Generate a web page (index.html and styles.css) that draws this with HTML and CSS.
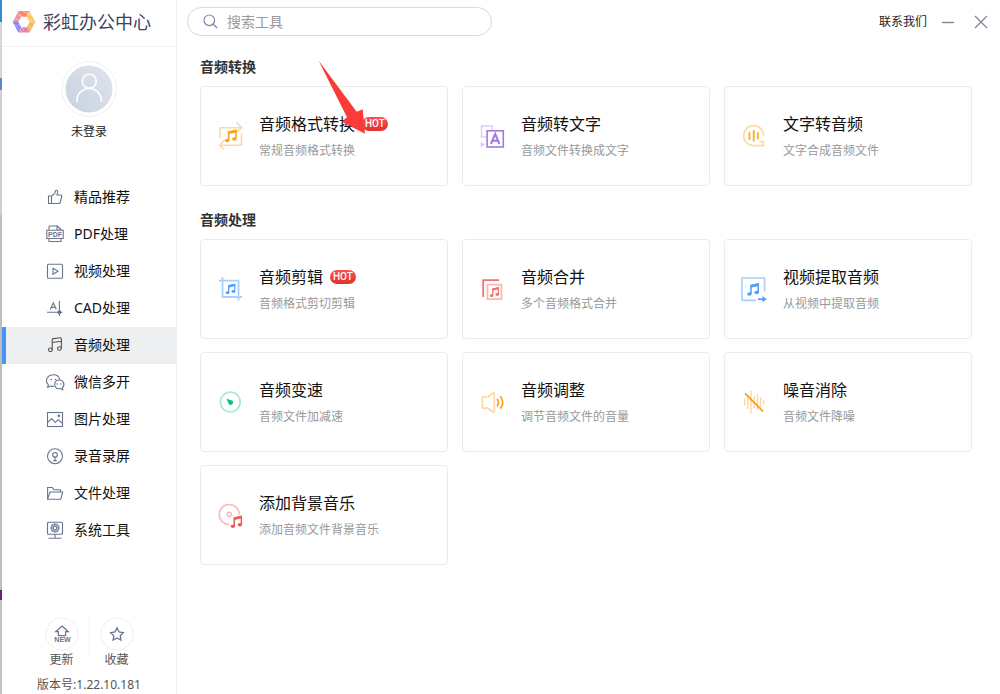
FILE: index.html
```html
<!DOCTYPE html>
<html lang="zh-CN">
<head>
<meta charset="utf-8">
<title>彩虹办公中心</title>
<link rel="stylesheet" href="styles.css">
</head>
<body>
<svg class="defs" aria-hidden="true">
  <defs>
    <symbol id="note" viewBox="0 0 12 13">
      <path d="M4 10.8V3L11 1.4V9.4" fill="none" stroke="currentColor" stroke-width="1.5"/>
      <path d="M3.4 2.4L11.6 .6V3.3L3.4 5.1z" fill="currentColor"/>
      <ellipse cx="2.6" cy="11" rx="2.2" ry="1.7" fill="currentColor"/>
      <ellipse cx="9.5" cy="9.6" rx="2.2" ry="1.7" fill="currentColor"/>
    </symbol>
  </defs>
</svg>
<div class="app">
  <div class="edge"></div>
  <aside class="sidebar">
    <div class="brand">
      <svg class="logo" width="24" height="24" viewBox="0 0 24 24">
        <path d="M.7 12L6.5 1L9.4 6.7L6.2 12z" fill="#f08fa0"/>
        <path d="M6.5 1H17.5L14.6 6.7H9.4z" fill="#f58a68"/>
        <path d="M17.5 1L23.3 12H17.8L14.6 6.7z" fill="#fbc95c"/>
        <path d="M23.3 12L17.5 22.6L14.6 17.2L17.8 12z" fill="#fbb35c"/>
        <path d="M6.5 22.6H17.5L14.6 17.2H9.4z" fill="#e77fb4"/>
        <path d="M.7 12H6.2L9.4 17.2L6.5 22.6z" fill="#8a82f2"/>
        <path d="M5 4L12 7.6M3 8L8 10.6M10 1L17 4.7M14 1L20 6M18 9L22 15M16 16L20 18M6 14L12 20M3 14L10 22" stroke="#fff" stroke-width=".7" opacity=".6"/>
      </svg>
      <h1 class="brand-name">彩虹办公中心</h1>
    </div>
    <button class="profile" type="button">
      <svg class="avatar" width="56" height="56" viewBox="0 0 56 56" fill="none">
        <defs><linearGradient id="face" x1="1" y1="0" x2="0" y2="1"><stop offset="0" stop-color="#e0e3ed"/><stop offset="1" stop-color="#c8d2e1"/></linearGradient></defs>
        <circle cx="28" cy="28" r="27.3" stroke="#eef0f5"/>
        <circle cx="28" cy="28" r="23.5" fill="url(#face)"/>
        <circle cx="28.3" cy="20.3" r="7" stroke="#fff" stroke-width="1.6"/>
        <path d="M16 41V39.5A12.2 12 0 0 1 40.4 39.5V41" stroke="#fff" stroke-width="1.6"/>
      </svg>
      <span>未登录</span>
    </button>
    <nav class="nav">
      <a class="nav-item" href="#"><svg class="nav-icon" viewBox="0 0 18 18"><path d="M2.5 8H5.5V15.5H2.5z M5.5 8L8.7 5.6L9.5 2.8C10 1.8 12 2.4 11.7 4.2L11 7H14.5Q16 7 15.7 8.5L14.4 14Q14 15.5 12.7 15.5H5.5"/></svg>精品推荐</a>
      <a class="nav-item" href="#"><svg class="nav-icon" viewBox="0 0 18 18"><path d="M3 5V2Q3 1 4 1H11.5L15 4.5V5 M11 1V5H15 M3 14V16.5H15V14 M.8 5.3H17.2V13.5H.8z"/><text class="pdf-mark" x="9" y="12">PDF</text></svg>PDF处理</a>
      <a class="nav-item" href="#"><svg class="nav-icon" viewBox="0 0 18 18"><rect x="1.5" y="2.2" width="15" height="14" rx="1"/><path d="M7 6.2V12.2L12 9.2z"/></svg>视频处理</a>
      <a class="nav-item" href="#"><svg class="nav-icon" viewBox="0 0 18 18"><path d="M1 13.3H16.5 M13.4 2V17 M4.3 10.5L7.3 3.8L10.3 10.5 M5.4 8.4H9.2"/><circle class="solid" cx="13.4" cy="13.3" r="1.4"/></svg>CAD处理</a>
      <a class="nav-item active" href="#" aria-current="page"><svg class="nav-icon" viewBox="0 0 18 18"><path d="M6.2 13.8V4Q6.2 2.8 7.5 2.6L14.2 1.8Q15.4 1.7 15.4 3V12.2 M6.2 6.5L15.4 5.3"/><ellipse cx="4.4" cy="13.8" rx="1.9" ry="1.8"/><ellipse cx="13.4" cy="12.5" rx="1.9" ry="1.8"/></svg>音频处理</a>
      <a class="nav-item" href="#"><svg class="nav-icon" viewBox="0 0 18 18"><path d="M8.2 13.4Q6 13.8 4.3 13L1.7 14.3L2.3 11.7C-2 7 2 1.8 7.4 1.8Q12.8 1.8 13.8 6.8"/><path d="M13.2 7C7.5 7 7 15.6 13 15.8L14.7 15.6L16.7 16.7L16.4 14.8C19.5 11.7 17.5 7 13.2 7z"/><path d="M5.3 6v1 M9.5 6v1 M11.2 10.6v1 M14.8 10.6v1" stroke-width="1.6"/></svg>微信多开</a>
      <a class="nav-item" href="#"><svg class="nav-icon" viewBox="0 0 18 18"><rect x="1.5" y="2.5" width="15" height="14"/><path d="M2 12.2L5.7 8.6L9.3 12.5L12.2 9.7L16 13"/><circle class="solid" cx="12.8" cy="5.8" r=".8"/></svg>图片处理</a>
      <a class="nav-item" href="#"><svg class="nav-icon" viewBox="0 0 18 18"><circle cx="9" cy="9.2" r="7.5"/><circle cx="9" cy="7.8" r="2.3"/><path d="M9 10V13.6 M7.3 13.6H10.7"/></svg>录音录屏</a>
      <a class="nav-item" href="#"><svg class="nav-icon" viewBox="0 0 18 18"><path d="M1.6 15V3.5H6.2L8 5.7H14.5V8 M1.6 15.2L4 8H16.7L14.8 15.2z"/></svg>文件处理</a>
      <a class="nav-item" href="#"><svg class="nav-icon" viewBox="0 0 18 18"><rect x="1.5" y="1.2" width="15" height="12" rx="1"/><path d="M9 13V17 M2.5 17.2H15.5"/><circle cx="9" cy="7" r="4"/><circle cx="9" cy="7" r="1.8"/><path d="M9 3v2 M9 9v2 M5 7h2 M11 7h2 M6.3 4.2l1.4 1.4 M11.7 4.2l-1.4 1.4 M6.3 9.8l1.4-1.4 M11.7 9.8l-1.4-1.4"/></svg>系统工具</a>
    </nav>
    <footer class="side-foot">
      <div class="foot-actions">
        <button class="foot-btn" type="button">
          <svg width="34" height="34" viewBox="0 0 34 34"><circle cx="17" cy="17" r="16.2" fill="none" stroke="#eceef2"/><path d="M17 9L23.3 14.7H20.6V18.7H13.4V14.7H10.7z" fill="none" stroke="#68748f" stroke-width="1.2"/><text class="new-mark" x="17.5" y="25">NEW</text></svg>
          <span>更新</span>
        </button>
        <span class="foot-split"></span>
        <button class="foot-btn" type="button">
          <svg width="34" height="34" viewBox="0 0 34 34"><circle cx="17" cy="17" r="16.2" fill="none" stroke="#eceef2"/><path d="M17 11L19 15L23.3 15.6L20.2 18.7L20.9 23L17 21L13.1 23L13.8 18.7L10.7 15.6L15 15z" fill="none" stroke="#68748f" stroke-width="1.3"/></svg>
          <span>收藏</span>
        </button>
      </div>
      <p class="version">版本号:1.22.10.181</p>
    </footer>
  </aside>
  <div class="main">
    <header class="topbar">
      <label class="search">
        <svg width="16" height="16" viewBox="0 0 16 16" fill="none" stroke="#7b88a8" stroke-width="1.2"><circle cx="6.3" cy="6.3" r="5.3"/><path d="M10.2 10.2L14.2 14"/></svg>
        <input class="search-input" type="text" placeholder="搜索工具" aria-label="搜索工具">
      </label>
      <div class="window-tools">
        <a class="contact" href="#">联系我们</a>
        <button class="win-btn" type="button" aria-label="最小化"><svg width="14" height="14" viewBox="0 0 14 14"><path d="M1 7.5H13" stroke="#7d8594" stroke-width="1.4"/></svg></button>
        <button class="win-btn" type="button" aria-label="关闭"><svg width="14" height="14" viewBox="0 0 14 14"><path d="M1 1L13 13M13 1L1 13" stroke="#7d8594" stroke-width="1.2"/></svg></button>
      </div>
    </header>
    <main class="content">
      <section>
        <h2 class="section-title">音频转换</h2>
        <div class="grid">
          <a class="card" href="#">
            <svg class="card-icon" viewBox="0 0 26 26"><path d="M2 15V4.7H23 M18.5 -.4L23.7 4.7L19 9 M23.5 10.5V22.3H2 M6.5 26.5L1.5 22.3L6.5 17.5" fill="none" stroke="#fddaa4" stroke-width="1.6"/><use href="#note" x="6.5" y="6" width="12.5" height="13.5" color="#fba41d"/></svg>
            <div class="card-text"><h3 class="card-title">音频格式转换<span class="hot">HOT</span></h3><p class="card-desc">常规音频格式转换</p></div>
          </a>
          <a class="card" href="#">
            <svg class="card-icon" viewBox="0 0 26 26"><path d="M6 14H1.5V3H12V6.5" fill="none" stroke="#dccbfa" stroke-width="1.5"/><path d="M.7 18.8L4.8 21.5L.7 24.2z" fill="#dccbfa"/><rect x="7.1" y="7.8" width="16.2" height="16.2" fill="#fff" stroke="#a077ea" stroke-width="1.6"/><path d="M11 21L15.2 10.9L19.4 21M12.6 17.7H17.8" fill="none" stroke="#a077ea" stroke-width="2"/></svg>
            <div class="card-text"><h3 class="card-title">音频转文字</h3><p class="card-desc">音频文件转换成文字</p></div>
          </a>
          <a class="card" href="#">
            <svg class="card-icon" viewBox="0 0 26 26"><path d="M21.7 12.7A10 10 0 1 0 11.7 22.7H21.3V18.7H17.5" fill="none" stroke="#fddaa4" stroke-width="1.7"/><path d="M7.5 8.7V17M11.7 7V18.5M15.9 9.3V16.3" stroke="#fbb01d" stroke-width="1.8"/></svg>
            <div class="card-text"><h3 class="card-title">文字转音频</h3><p class="card-desc">文字合成音频文件</p></div>
          </a>
        </div>
      </section>
      <section>
        <h2 class="section-title">音频处理</h2>
        <div class="grid">
          <a class="card" href="#">
            <svg class="card-icon" viewBox="0 0 26 26"><path d="M1 4.7H20.5V24.5M4.5 1V21H24" fill="none" stroke="#a9d0fd" stroke-width="1.8"/><use href="#note" x="7.2" y="7.2" width="10.5" height="11.3" color="#519ffb"/></svg>
            <div class="card-text"><h3 class="card-title">音频剪辑<span class="hot">HOT</span></h3><p class="card-desc">音频格式剪切剪辑</p></div>
          </a>
          <a class="card" href="#">
            <svg class="card-icon" viewBox="0 0 26 26"><path d="M3.2 21V4.2H19" fill="none" stroke="#ef7471" stroke-width="1.8"/><rect x="7.4" y="8.7" width="14" height="14.4" fill="none" stroke="#f9bcbb" stroke-width="1.9"/><use href="#note" x="9.4" y="10.5" width="10" height="10.8" color="#ef7471"/></svg>
            <div class="card-text"><h3 class="card-title">音频合并</h3><p class="card-desc">多个音频格式合并</p></div>
          </a>
          <a class="card" href="#">
            <svg class="card-icon" viewBox="0 0 26 26"><path d="M22.6 15.5V2.9Q22.6 2 21.7 2H.9Q0 2 0 2.9V23.5Q0 24.4 .9 24.4H14" fill="none" stroke="#a9d0fd" stroke-width="1.7"/><use href="#note" x="4.8" y="6.5" width="12.5" height="13.5" color="#519ffb"/><path d="M16 23.2H22" stroke="#519ffb" stroke-width="1.8"/><path d="M20.5 20L24.7 23.2L20.5 26.3z" fill="#519ffb"/></svg>
            <div class="card-text"><h3 class="card-title">视频提取音频</h3><p class="card-desc">从视频中提取音频</p></div>
          </a>
          <a class="card" href="#">
            <svg class="card-icon" viewBox="0 0 26 26"><circle cx="12.3" cy="13" r="9.9" fill="none" stroke="#aee7d2" stroke-width="1.7"/><path d="M8.5 9.7L14.6 11.8A2.4 2.4 0 1 1 10.8 15z" fill="#10bd82"/></svg>
            <div class="card-text"><h3 class="card-title">音频变速</h3><p class="card-desc">音频文件加减速</p></div>
          </a>
          <a class="card" href="#">
            <svg class="card-icon" viewBox="0 0 26 26"><path d="M2.3 8.5Q2.3 7.8 3 7.8H8L13 4Q14.3 3.6 14.3 5V22Q14.3 23.4 13 23L8 19.2H3Q2.3 19.2 2.3 18.5z" fill="none" stroke="#fddaa4" stroke-width="1.7"/><path d="M17 9.7Q19.8 13.5 17 17.3M20.3 7.2Q25.1 13.5 20.3 19.8" fill="none" stroke="#fba41d" stroke-width="1.7"/></svg>
            <div class="card-text"><h3 class="card-title">音频调整</h3><p class="card-desc">调节音频文件的音量</p></div>
          </a>
          <a class="card" href="#">
            <svg class="card-icon" viewBox="0 0 26 26"><path d="M2.6 9.5V16.5M5.8 6V20M9 2V24.5M12.2 7V19.5M15.4 5.5V21M18.6 8V19M21.6 11V15.5" stroke="#fddaa4" stroke-width="1.5"/><path d="M3 4.3L21 22.3" stroke="#fb9d1d" stroke-width="1.8"/></svg>
            <div class="card-text"><h3 class="card-title">噪音消除</h3><p class="card-desc">音频文件降噪</p></div>
          </a>
          <a class="card" href="#">
            <svg class="card-icon" viewBox="0 0 26 26"><path d="M21.2 12.5A10 10 0 1 0 11.3 22.5" fill="none" stroke="#f9bcbb" stroke-width="1.7"/><circle cx="11.3" cy="12.4" r="2.1" fill="none" stroke="#f9bcbb" stroke-width="1.5"/><use href="#note" x="12.2" y="13" width="12.2" height="13.2" color="#ec5c59"/></svg>
            <div class="card-text"><h3 class="card-title">添加背景音乐</h3><p class="card-desc">添加音频文件背景音乐</p></div>
          </a>
        </div>
      </section>
    </main>
    <svg class="pointer" width="48" height="75" viewBox="0 0 48 75" aria-hidden="true"><path d="M.5 .5L38.7 51.7L44.7 49.3L47 73.7L23.7 61.7L29 57.3z" fill="#fb3a3a"/></svg>
  </div>
</div>
</body>
</html>
```
FILE: styles.css
```css
* { box-sizing: border-box; }
body {
  margin: 0;
  font-family: "Noto Sans", "Noto Sans CJK SC", sans-serif;
  font-size: 12px;
  line-height: 18px;
  color: #222;
  background: #fff;
}
h1, h2, h3, p { margin: 0; font-weight: 400; }
a { color: inherit; text-decoration: none; }
button { padding: 0; border: 0; background: none; font: inherit; color: inherit; }
svg { display: block; flex: none; overflow: visible; }
.defs { position: absolute; width: 0; height: 0; }

.app { display: flex; min-height: 100vh; }
.edge {
  flex: none;
  width: 2px;
  background: linear-gradient(#2f8ad8 0 22px, #d6d6d6 22px 78px, #5f86c8 78px 90px, #d0d0d0 90px 215px, #bdbdbd 215px 590px, #5d2a66 590px 600px, #c4c4c4 600px);
}
.sidebar {
  display: flex;
  flex: none;
  flex-direction: column;
  width: 175px;
  border-right: 1px solid #f2f2f4;
}
.brand {
  display: flex;
  align-items: center;
  gap: 7px;
  height: 47px;
  padding: 0 0 3px 10px;
  border-bottom: 1px solid #f2f2f4;
}
.brand-name { font-size: 18px; line-height: 26px; color: #3c4260; }
.profile {
  display: flex;
  flex-direction: column;
  align-items: center;
  gap: 6px;
  padding-top: 14px;
}
.nav { display: flex; flex-direction: column; margin-top: 38px; }
.nav-item {
  display: flex;
  align-items: center;
  gap: 10px;
  height: 37px;
  padding: 0 0 2px 40px;
  border-left: 4px solid transparent;
  font-size: 14px;
  color: #111;
}
.nav-item.active { border-color: #4792fb; background: #edeff1; }
.nav-icon { width: 18px; height: 18px; fill: none; stroke: #68748f; stroke-width: 1.1; }
.active .nav-icon { stroke: #555; }
.nav-icon .solid { fill: #68748f; }
.pdf-mark, .new-mark {
  font-family: "Liberation Sans", sans-serif;
  font-size: 7px;
  font-weight: 700;
  text-anchor: middle;
  fill: #68748f;
  stroke: none;
}

.side-foot { margin-top: auto; color: #555; }
.foot-actions { display: flex; justify-content: center; gap: 10px; }
.foot-btn { display: flex; flex-direction: column; align-items: center; width: 34px; }
.foot-split { width: 1px; height: 38px; background: #f4f4f6; }
.version { margin-top: 7px; text-align: center; }

.main { position: relative; flex: 1; min-width: 0; }
.topbar {
  display: flex;
  align-items: center;
  justify-content: space-between;
  height: 43px;
  padding: 0 12px 0 10px;
}
.search {
  display: flex;
  align-items: center;
  gap: 8px;
  width: 305px;
  height: 29px;
  padding: 0 15px;
  border: 1px solid #dadada;
  border-radius: 15px;
}
.search-input {
  flex: 1;
  min-width: 0;
  padding: 0;
  border: 0;
  outline: 0;
  background: none;
  font: inherit;
  font-size: 14px;
}
.search-input::placeholder { color: #999; opacity: 1; }
.window-tools { display: flex; align-items: center; gap: 14px; }
.win-btn + .win-btn { margin-left: 5px; }

.content { display: grid; gap: 24px; padding: 14px 28px 24px 23px; }
.section-title { margin-bottom: 9px; font-size: 14px; line-height: 20px; font-weight: 700; color: #333; }
.grid { display: grid; grid-template-columns: repeat(3, 1fr); gap: 13px 14px; }
.card {
  display: flex;
  align-items: center;
  gap: 15px;
  min-height: 100px;
  padding: 0 17px;
  border: 1px solid #ebebeb;
  border-radius: 4px;
}
.card-icon { width: 26px; height: 26px; }
.card-title {
  display: flex;
  align-items: center;
  gap: 7px;
  margin-bottom: 6px;
  font-size: 16px;
  line-height: 24px;
  color: #111;
}
.card-desc { color: #999; }
.hot {
  padding: 0 3px;
  border-radius: 7px;
  background: linear-gradient(#fb5150, #e03330);
  font-family: Roboto, sans-serif;
  font-size: 10px;
  line-height: 14px;
  font-weight: 500;
  color: #fff;
}
.pointer { position: absolute; left: 141px; top: 60px; }
```
